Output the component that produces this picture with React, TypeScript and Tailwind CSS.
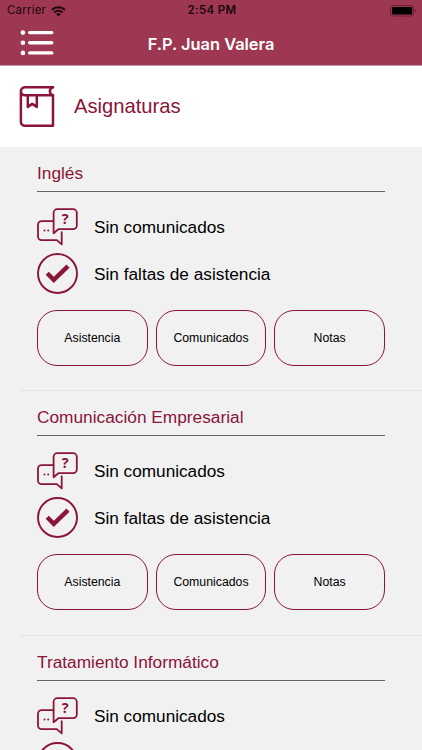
const SUBJECTS = ["Inglés", "Comunicación Empresarial", "Tratamiento Informático"];

const ACTIONS = ["Asistencia", "Comunicados", "Notas"];

function WifiIcon() {
  return (
    <svg className="w-[15px] h-[11px]" viewBox="0 0 15 11" fill="none" stroke="#1c060c" strokeWidth="2">
      <path d="M.9 3.9a9.4 9.4 0 0 1 13.2 0" />
      <path d="M3.3 6.5a6 6 0 0 1 8.4 0" />
      <path d="M7.5 10.4 5.2 8.2a3.3 3.3 0 0 1 4.6 0z" fill="#1c060c" stroke="none" />
    </svg>
  );
}

function BatteryIcon() {
  return (
    <svg className="w-[27px] h-[12px]" viewBox="0 0 27 12" fill="none">
      <rect x="0.6" y="0.6" width="23" height="10.4" rx="2.4" stroke="#691f36" strokeWidth="1" />
      <rect x="2" y="2" width="20.2" height="7.6" rx="1" fill="#000" />
      <path d="M25 4v3.8c1.6-.6 1.6-3.2 0-3.8z" fill="#691f36" />
    </svg>
  );
}

function MenuIcon() {
  return (
    <svg className="w-[34px] h-[26px]" viewBox="0 0 34 26" fill="none" stroke="#fff" strokeLinecap="round">
      <path d="M9.7 2.6h22.1M9.7 12.8h22.1M9.7 22.9h22.1" strokeWidth="3.4" />
      <g fill="#fff" stroke="none">
        <circle cx="2.9" cy="2.6" r="2.3" />
        <circle cx="2.9" cy="12.8" r="2.3" />
        <circle cx="2.9" cy="22.9" r="2.3" />
      </g>
    </svg>
  );
}

function BookIcon() {
  return (
    <svg className="w-[36px] h-[42px] overflow-visible" viewBox="0 0 36 42" fill="none" stroke="#8a1538" strokeWidth="2.5" strokeLinecap="round" strokeLinejoin="round">
      <path d="M33 1.2H4.9a4 4 0 0 0-4 4v30.6a4 4 0 0 0 4 4H33V9.2H4.9a4 4 0 0 1-4-4" />
      <path d="M33 1.2c-4.2 1.6-4.2 6.4 0 8" />
      <path d="M7.8 9.5v11.4l4.5-3 4.5 3V9.5" />
    </svg>
  );
}

function MessagesIcon() {
  return (
    <svg className="w-[41px] h-[38px]" viewBox="0 0 41 38" fill="none" stroke="#8a1538" strokeWidth="1.8" strokeLinejoin="round">
      <path d="M20.3 1.2h15.8a3.7 3.7 0 0 1 3.7 3.7v12.6a3.7 3.7 0 0 1-3.7 3.7H21.4l-4.8 4V4.9a3.7 3.7 0 0 1 3.7-3.7z" />
      <path d="M16.4 13.1H4.6A3.6 3.6 0 0 0 1 16.7v11.8a3.6 3.6 0 0 0 3.6 3.6h15.2l4.9 4.3V24.2" strokeLinecap="round" />
      <g fill="#8a1538" stroke="none">
        <circle cx="7.5" cy="22.4" r="1" />
        <circle cx="11.2" cy="22.4" r="1" />
        <text x="28.2" y="16.2" fontSize="14.5" fontWeight="700" textAnchor="middle" className="font-['Open_Sans',sans-serif]">?</text>
      </g>
    </svg>
  );
}

function CheckIcon() {
  return (
    <svg className="w-[41px] h-[41px]" viewBox="0 0 41 41" fill="none" stroke="#8a1538">
      <circle cx="20.5" cy="20.5" r="19.5" strokeWidth="1.9" />
      <path d="m10.2 20.3 6.6 6.6L31 13.2" strokeWidth="4.4" />
    </svg>
  );
}

function SubjectCard({ name }: { name: string }) {
  return (
    <section className="h-[244.4px] shrink-0 pl-[21px]">
      <div className="h-full pl-4 pr-[37px] border-b border-[#e2e2e4]">
        <h2 className="h-[45px] pt-[14px] border-b border-[#666] text-[17.3px] leading-[24px] text-[#8a1538]">
          {name}
        </h2>
        <div className="flex items-center h-[38px] mt-4">
          <MessagesIcon />
          <span className="ml-4 text-[17.2px] leading-[24px]">Sin comunicados</span>
        </div>
        <div className="flex items-center h-[41px] mt-[7px]">
          <CheckIcon />
          <span className="ml-4 text-[17.25px] leading-[24px]">Sin faltas de asistencia</span>
        </div>
        <div className="grid grid-cols-3 gap-2 mt-4">
          {ACTIONS.map((action) => (
            <button key={action} className="h-[56px] rounded-[20px] border border-[#8a1538] text-[12.3px]">
              {action}
            </button>
          ))}
        </div>
      </div>
    </section>
  );
}

export default function App() {
  return (
    <div className="flex flex-col w-[422px] h-[750px] overflow-hidden bg-[#f1f1f1] text-black font-['Liberation_Sans',Arial,sans-serif]">
      <header className="h-[66px] shrink-0 bg-[#9e3852] border-b border-[#c596a3] font-['Inter',sans-serif]">
        <div className="grid grid-cols-3 items-center h-[22px] pl-[7px] pr-[5px] text-[11.5px] text-[#1c060c]">
          <div className="flex items-center gap-[5px] tracking-[0.2px]">
            Carrier
            <WifiIcon />
          </div>
          <span className="text-center font-semibold tracking-[0.3px]">2:54 PM</span>
          <div className="flex justify-end">
            <BatteryIcon />
          </div>
        </div>
        <div className="grid grid-cols-[60px_1fr_60px] items-center h-[42px] pl-5 pr-5">
          <MenuIcon />
          <h1 className="pt-[2px] text-center text-[16.4px] font-semibold text-white">F.P. Juan Valera</h1>
        </div>
      </header>

      <div className="flex items-center gap-[18px] h-[81px] shrink-0 pl-5 bg-white text-[20.2px] text-[#8a1538]">
        <BookIcon />
        Asignaturas
      </div>

      <main className="flex flex-col grow min-h-0 overflow-y-auto [scrollbar-width:none]">
        {SUBJECTS.map((name) => (
          <SubjectCard key={name} name={name} />
        ))}
      </main>
    </div>
  );
}
